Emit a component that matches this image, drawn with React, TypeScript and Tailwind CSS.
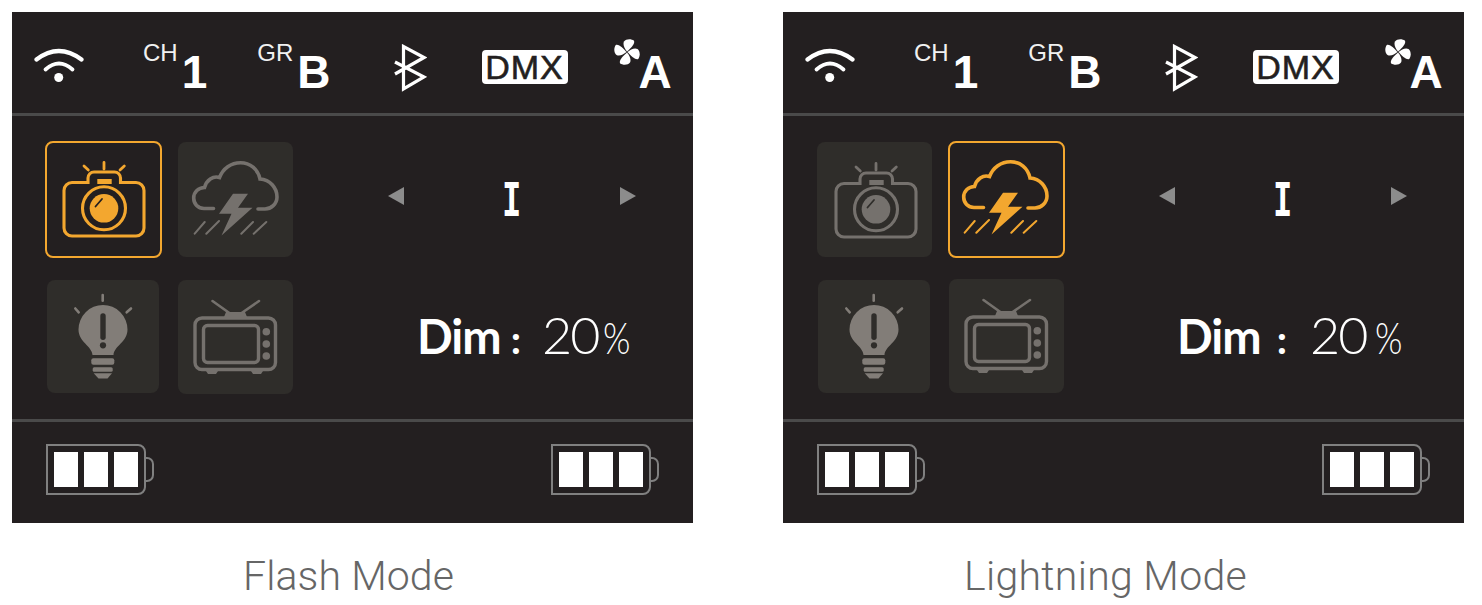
import type { ReactNode } from 'react';

const PANEL = '#231f20';
const TILE = '#2f2d2a';

function Wifi() {
  return (
    <svg width="52" height="36" viewBox="0 0 52 36" fill="none" stroke="white" strokeLinecap="round">
      <path d="M3.5 11.5Q25.7 -5.5 48.5 11.5" strokeWidth="4.2" />
      <path d="M12.5 21.5Q26 9.5 39.5 21.5" strokeWidth="3.8" />
      <circle cx="25.7" cy="29.5" r="4.5" fill="white" stroke="none" />
    </svg>
  );
}

function Bluetooth() {
  return (
    <svg width="34" height="48" viewBox="0 0 34 48" fill="none" stroke="white" strokeWidth="3.2">
      <path d="M2 18L31 33L10.5 45V2.5L31 13.5L2 30" />
    </svg>
  );
}

function Fan() {
  const blade = 'M13 12.5C10.5 9.5 8.5 5.5 10 2.5C12 -.3 17.5 -.3 20 1.8C21 4.5 18 8 13 12.5Z';
  return (
    <svg width="26" height="26" viewBox="0 0 26 26" fill="white">
      <path d={blade} />
      <path d={blade} transform="rotate(90 13 13)" />
      <path d={blade} transform="rotate(180 13 13)" />
      <path d={blade} transform="rotate(270 13 13)" />
    </svg>
  );
}

function Sup({ sup, main, className }: { sup: string; main: string; className: string }) {
  return (
    <div className={`flex h-[50px] items-start ${className}`}>
      <span className="mt-[-1px] text-[24px] leading-[28px] text-[#f1f1f1]">{sup}</span>
      <span className="mt-[9px] ml-[4px] text-[46px] leading-[46px] font-bold text-white">{main}</span>
    </div>
  );
}

function Header() {
  return (
    <div className="flex h-[101px] items-start pl-[21px] font-['Liberation_Sans',sans-serif]">
      <div className="mt-[36px]"><Wifi /></div>
      <Sup sup="CH" main="1" className="mt-[28px] ml-[58px]" />
      <Sup sup="GR" main="B" className="mt-[28px] ml-[50px]" />
      <div className="mt-[32px] ml-[62px]"><Bluetooth /></div>
      <div className="mt-[38px] ml-[55px] flex h-[34px] w-[86px] items-center justify-center rounded-[4px] bg-white text-[34px] leading-none tracking-[1px] text-[#231f20] [-webkit-text-stroke:0.6px_#231f20]">
        DMX
      </div>
      <div className="mt-[27px] ml-[46px]"><Fan /></div>
      <span className="mt-[37px] ml-[-1px] text-[46px] leading-[46px] font-bold text-white">A</span>
    </div>
  );
}

function Divider() {
  return <div className="h-[3px] bg-[#4a4a4a]" />;
}

function CameraIcon({ cut }: { cut: string }) {
  return (
    <svg width="117" height="117" viewBox="0 0 117 117" fill="none" stroke="currentColor" strokeWidth="3.1" strokeLinecap="round">
      <path d="M59 21.5V28M39 25L43.3 29M79.3 25L75 29" strokeWidth="2.8" />
      <path d="M43 41.5H27a8 8 0 0 0-8 8V87a8 8 0 0 0 8 8H91a8 8 0 0 0 8-8V49.5a8 8 0 0 0-8-8H75.5V37a6 6 0 0 0-6-6H49a6 6 0 0 0-6 6Z" />
      <rect x="52.3" y="38" width="14.4" height="5" fill="currentColor" stroke="none" />
      <circle cx="59" cy="67.3" r="21.5" fill={cut} />
      <circle cx="59" cy="67.3" r="14.3" fill="currentColor" stroke="none" />
      <path d="M50.5 65.5L57 58" stroke={cut} strokeWidth="1.8" />
    </svg>
  );
}

function StormIcon() {
  return (
    <svg width="117" height="117" viewBox="0 0 117 117" fill="none" stroke="currentColor" strokeLinecap="round">
      <path
        d="M35.5 66.5H26C20 66.5 15.7 62 15.7 56C15.7 50 20.5 45.5 26.5 45.5C28.5 38 35 33.5 41.5 35.5C45 26.5 53 20.7 62.5 20.7C72 20.7 80 27 82 37C92 37.5 99 46 99 55C99 62 93 67 87 67H80"
        strokeWidth="3.6"
      />
      <polygon points="70,51.7 55,51.7 41,71.7 53.5,71.7 43.5,93.5 74.5,65.7 60,65.7" fill="currentColor" stroke="none" />
      <path d="M16.7 91.7L26.7 80M28.3 91.7L41 79M63.3 91.7L75 80M75.7 91.7L88.3 80" strokeWidth="2" />
    </svg>
  );
}

function BulbIcon({ cut }: { cut: string }) {
  return (
    <svg width="112" height="113" viewBox="0 0 112 113" fill="none" stroke="#827d78" strokeLinecap="round">
      <path d="M55.7 15V20.7M28.3 28.5L31.7 32.3M84 28.5L79.7 32.3" strokeWidth="2.6" />
      <path d="M45.5 75C45 66 31.5 62 31.5 49.5A24.5 24.5 0 0 1 80.5 49.5C80.5 62 67 66 66.5 75Z" fill="#827d78" stroke="none" />
      <rect x="53.3" y="33.3" width="5.4" height="26.7" rx="2.7" fill={cut} stroke="none" />
      <circle cx="56" cy="65.3" r="3.1" fill={cut} stroke="none" />
      <rect x="44.3" y="78.3" width="23" height="6.4" rx="2" fill="#827d78" stroke="none" />
      <rect x="45.7" y="87.3" width="20" height="4.4" rx="1.5" fill="#827d78" stroke="none" />
      <polygon points="46.7,93.3 65,93.3 60.5,98.5 51.5,98.5" fill="#827d78" stroke="none" />
    </svg>
  );
}

function TvIcon() {
  return (
    <svg width="115" height="114" viewBox="0 0 115 114" fill="none" stroke="currentColor">
      <path d="M34.5 21L51.7 33.3M81 21L63.3 33.3" strokeWidth="2.6" strokeLinecap="round" />
      <polygon points="48,32 67,32 69,37 46,37" fill="currentColor" stroke="none" />
      <rect x="17" y="38" width="80.5" height="51.5" rx="7" strokeWidth="3.4" />
      <rect x="25.5" y="45.5" width="55" height="37" rx="4" strokeWidth="3.4" />
      <circle cx="88.3" cy="51.7" r="3.8" fill="currentColor" stroke="none" />
      <circle cx="88.3" cy="64" r="3.8" fill="currentColor" stroke="none" />
      <circle cx="88.3" cy="76" r="3.8" fill="currentColor" stroke="none" />
      <path d="M28 91H40L38 94H30ZM73 91H85L83 94H75Z" fill="currentColor" stroke="none" />
    </svg>
  );
}

function Tile({ active, className, children }: { active?: boolean; className: string; children: ReactNode }) {
  return (
    <div
      className={`rounded-[8px] ${className} ${
        active ? 'text-[#f3a72f] outline-2 outline-offset-[-2px] outline-[#f3a72f]' : 'bg-[#2f2d2a] text-[#75716d]'
      }`}
    >
      {children}
    </div>
  );
}

function Battery() {
  return (
    <div className="flex items-center">
      <div className="flex h-[51px] w-[100px] gap-[6px] rounded-tr-[8px] rounded-br-[8px] border-2 border-[#808080] py-[6px] pl-[6px]">
        <div className="w-[24px] bg-white" />
        <div className="w-[24px] bg-white" />
        <div className="w-[24px] bg-white" />
      </div>
      <div className="h-[25px] w-[8px] rounded-r-[7px] border-2 border-l-0 border-[#808080]" />
    </div>
  );
}

function Screen({ flash }: { flash: boolean }) {
  return (
    <div className="flex h-[511px] w-[681px] flex-col bg-[#231f20]">
      <Header />
      <Divider />
      <div className="flex h-[303px]">
        <div className="grid w-[282px] grid-cols-[132px_117px] grid-rows-[138px_116px] pt-[25px] pl-[33px]">
          <Tile active={flash} className={flash ? 'h-[117px] w-[117px]' : 'mt-px ml-px h-[115px] w-[115px]'}>
            <CameraIcon cut={flash ? PANEL : TILE} />
          </Tile>
          <Tile active={!flash} className={flash ? 'mt-px ml-px h-[115px] w-[115px]' : 'h-[117px] w-[117px]'}>
            <StormIcon />
          </Tile>
          <Tile className="mt-px ml-[2px] h-[113px] w-[112px]">
            <BulbIcon cut={TILE} />
          </Tile>
          <Tile className={flash ? 'mt-px ml-px h-[114px] w-[115px]' : 'ml-px h-[114px] w-[115px]'}>
            <TvIcon />
          </Tile>
        </div>
        <div className="flex flex-1 flex-col pl-[94px] text-white">
          <div className="mt-[68px] flex h-[33px] items-start">
            <div className="mt-[3px] h-0 w-0 border-y-[9px] border-r-[16px] border-y-transparent border-r-[#8c8c8c]" />
            <span className="ml-[95px] w-[20px] scale-x-[0.7] text-center font-['DejaVu_Sans_Mono',monospace] text-[46px] leading-[33px] font-bold">
              I
            </span>
            <div className="mt-[3px] ml-[101px] h-0 w-0 border-y-[9px] border-l-[16px] border-y-transparent border-l-[#8c8c8c]" />
          </div>
          <div className={`mt-[90px] flex items-baseline font-['Lato',sans-serif] ${flash ? 'ml-[29px]' : 'ml-[18px]'}`}>
            <span className="text-[47px] leading-[54px] font-bold tracking-[-1px]">Dim</span>
            <span className={`text-[40px] leading-[54px] font-bold ${flash ? 'ml-[10px]' : 'ml-[16px]'}`}>:</span>
            <span className={`text-[52px] leading-[54px] font-light tracking-[-2px] ${flash ? 'ml-[21px]' : 'ml-[23px]'}`}>20</span>
            <span className={`inline-block origin-left scale-x-[0.8] text-[44px] leading-[54px] font-light ${flash ? 'ml-[5px]' : 'ml-[9px]'}`}>%</span>
          </div>
        </div>
      </div>
      <Divider />
      <div className="flex h-[101px] items-start justify-between px-[34px] pt-[22px]">
        <Battery />
        <Battery />
      </div>
    </div>
  );
}

export default function App() {
  return (
    <div className="flex min-h-[605px] gap-[90px] bg-white p-[12px] font-['Roboto',sans-serif]">
      <div className="flex w-[681px] flex-col">
        <Screen flash />
        <p className="mt-[27px] pr-[8px] text-center text-[41px] leading-[52px] font-light tracking-[0.1px] text-[#666666]">Flash Mode</p>
      </div>
      <div className="flex w-[681px] flex-col">
        <Screen flash={false} />
        <p className="mt-[27px] pr-[36px] text-center text-[41px] leading-[52px] font-light tracking-[0.3px] text-[#666666]">Lightning Mode</p>
      </div>
    </div>
  );
}
